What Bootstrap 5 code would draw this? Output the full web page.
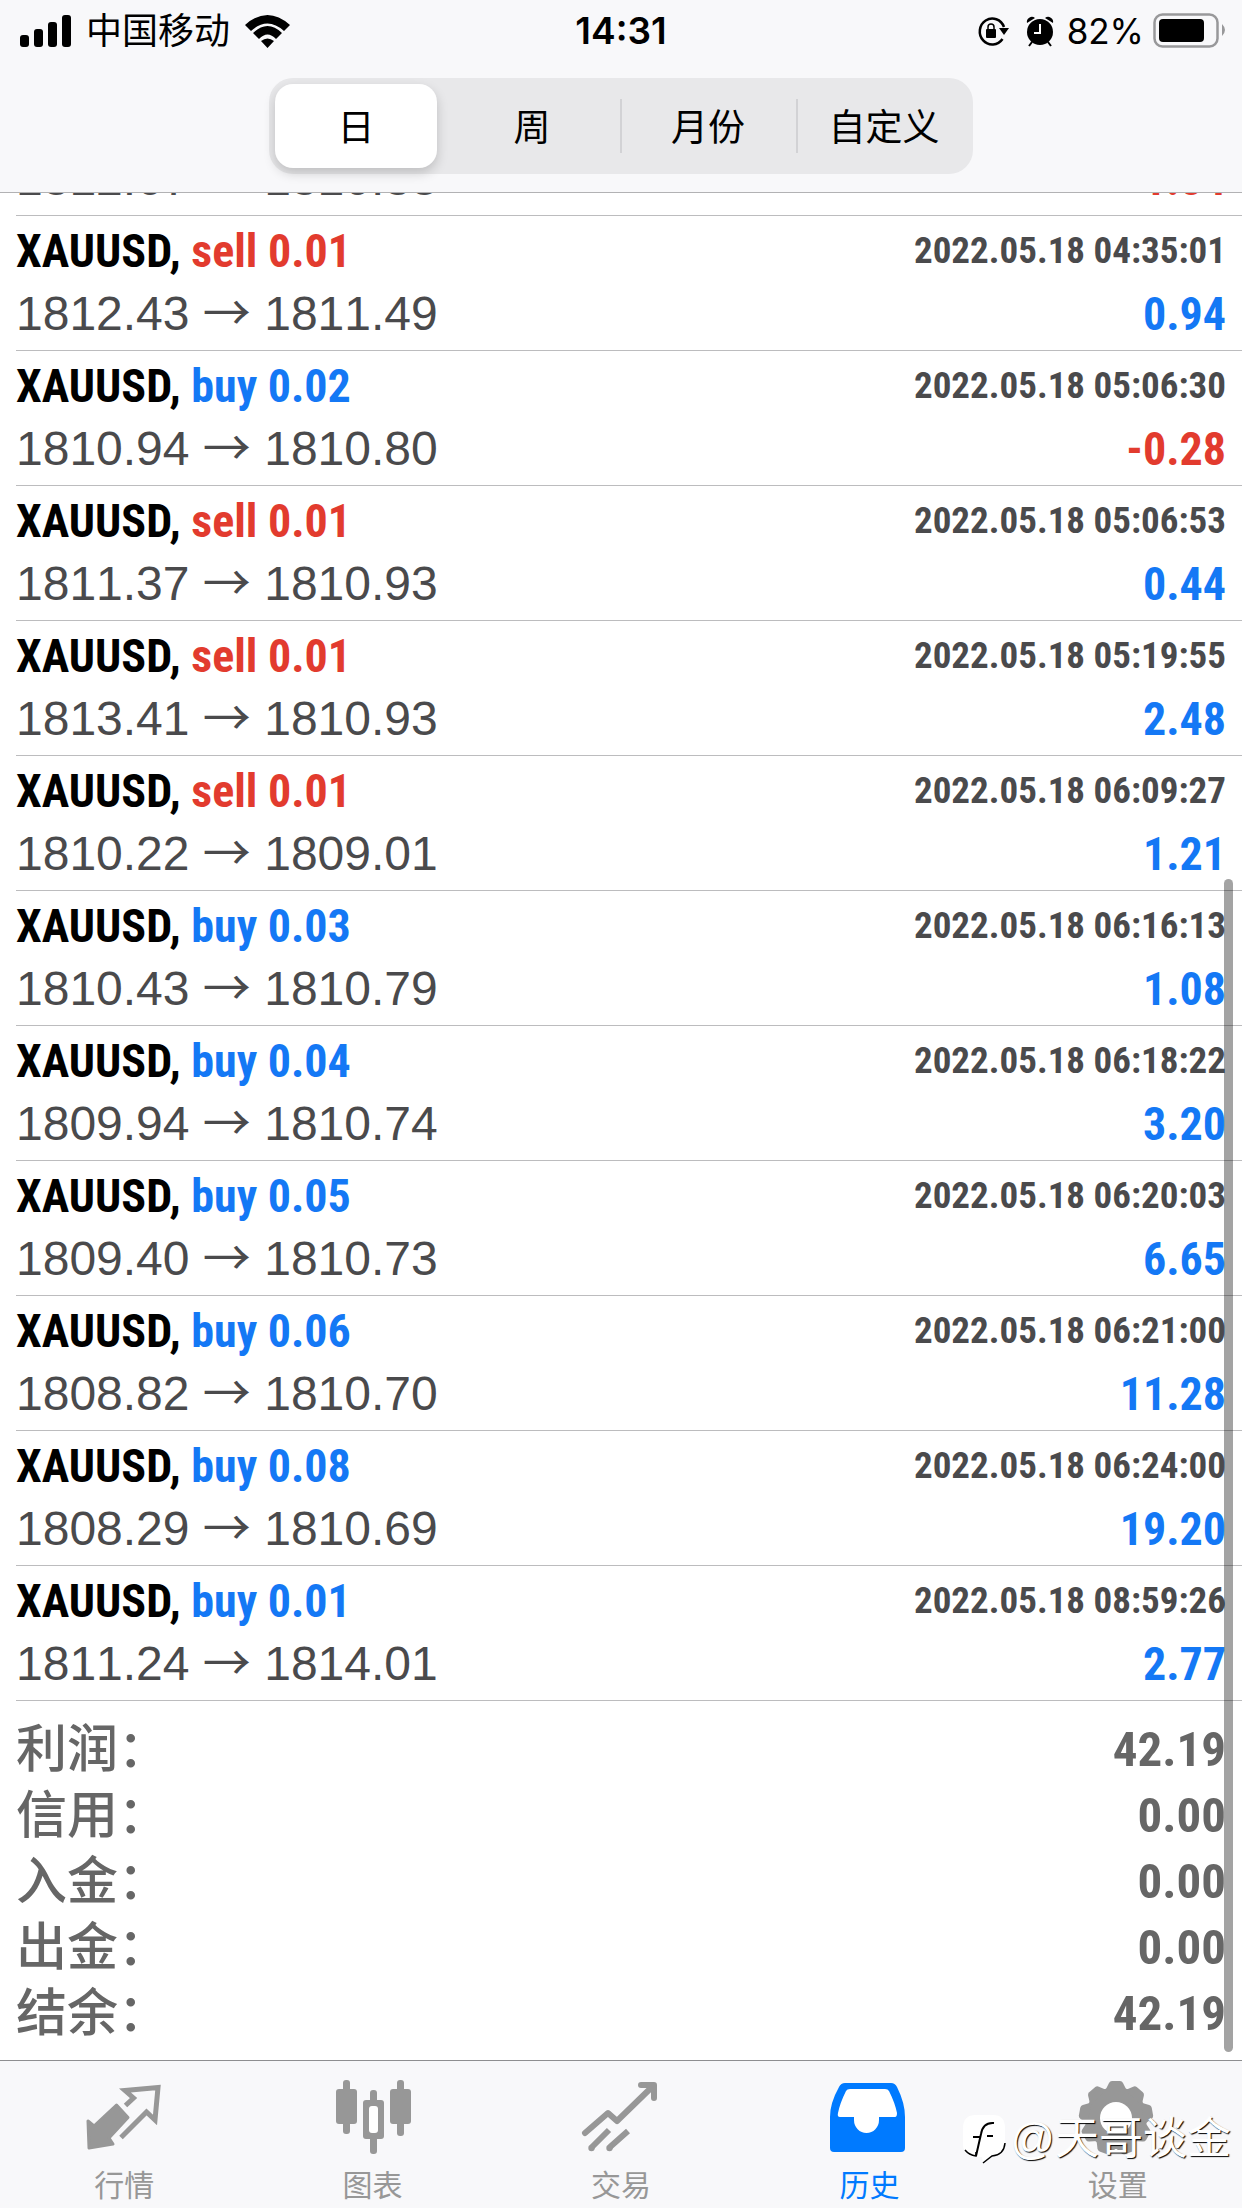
<!DOCTYPE html>
<html lang="zh-CN">
<head>
<meta charset="utf-8">
<meta name="viewport" content="width=device-width, initial-scale=1">
<title>历史</title>
<link href="https://cdn.jsdelivr.net/npm/bootstrap@5.3.0/dist/css/bootstrap.min.css" rel="stylesheet">
<style>
  :root { --chrome: #f8f8fa; --ink: #4a4a4c; --buy: #1478f5; --sell: #e23b2e; --idle: #979797; --active: #007aff; }
  body { font-family: "Liberation Sans", "Noto Sans CJK SC", sans-serif; color: #000; background: #fff; }
  .chrome-bar { background: var(--chrome); }
  .top-area { border-bottom: 1px solid #b2b2b4; padding-bottom: 18px; }
  .status-bar { height: 60px; padding: 2px 16px 0; }
  .status-bar .side { flex: 1 1 0; gap: 15px; }
  .status-bar .side-end { gap: 9px; }
  .carrier { font-size: 36px; line-height: 40px; padding-top: 2px; }
  .clock { font-family: Inter, sans-serif; font-size: 37px; line-height: 40px; font-weight: 600; }
  .charge { font-family: Inter, sans-serif; font-size: 35px; line-height: 40px; }
  .segments { width: 704px; max-width: 100%; height: 96px; margin-top: 18px; padding: 6px 0; border-radius: 24px; background: #e8e8ea; }
  .segments .btn { flex: 1 1 0; margin: 0 8px 0 6px; font-size: 37px; line-height: 44px; color: #000; border: 0; border-radius: 18px; padding: 5px 0 0; }
  .segments .btn-check:checked + .btn { background: #fff; color: #000; box-shadow: 0 5px 12px rgba(0,0,0,.18); }
  .divider-line { width: 2px; height: 54px; margin: 0 -1px; background: #d2d2d5; }
  .history-list { min-height: 0; }
  .deal { margin-left: 16px; border-bottom: 1px solid #bcbcbe; padding: 3px 16px 5px 0; }
  .condensed { font-family: "Roboto Condensed", "Liberation Sans", sans-serif; font-weight: 700; }
  .deal-name { font-size: 46px; line-height: 64px; }
  .deal-time { font-size: 37px; line-height: 64px; color: var(--ink); }
  .deal-price { font-size: 48px; line-height: 62px; color: var(--ink); font-kerning: none; }
  .deal-gain { font-size: 46px; line-height: 62px; }
  .arrow-glyph { font-family: "Noto Sans CJK SC", sans-serif; line-height: 1; }
  .buy { color: var(--buy); }
  .sell { color: var(--sell); }
  .totals { padding: 16px 16px 13px; color: #666; }
  .totals dt { font-size: 51px; line-height: 66px; font-weight: 500; }
  .totals dd { font-size: 49px; line-height: 66px; }
  .scroll-thumb { top: 686px; right: 9px; bottom: 8px; width: 9px; border-radius: 5px; background: rgba(0,0,0,.36); }
  .tabs-bar { border-top: 1px solid #8e8e90; }
  .tabs-bar .nav-link { color: var(--idle); padding: 18px 0 2px; font-size: 30px; line-height: 40px; gap: 11px; }
  .tabs-bar .nav-link.active { color: var(--active); }
  .tabs-bar svg { width: 76px; height: 76px; overflow: visible; }
  .stamp { right: 11px; bottom: 41px; gap: 4px; color: #fff; font-size: 44px; line-height: 56px; text-shadow: 1px 1px 1px #000; pointer-events: none; }
</style>
</head>
<body>
<div class="vh-100 d-flex flex-column overflow-hidden position-relative">
  <header class="chrome-bar top-area flex-shrink-0">
    <div class="status-bar d-flex align-items-center">
      <div class="side d-flex align-items-center">
        <svg class="ms-1" width="51" height="32" viewBox="0 0 51 32" aria-hidden="true"><rect y="20" width="9" height="12" rx="3"/><rect x="14" y="14" width="9" height="18" rx="3"/><rect x="28" y="7" width="9" height="25" rx="3"/><rect x="42" width="9" height="32" rx="3"/></svg>
        <span class="carrier">中国移动</span>
        <svg width="45" height="33" viewBox="0 0 45 33" aria-hidden="true"><path d="M0 10Q22.500-10 45 10L39 16Q22.500 1 6 16ZM8 18Q22.500 4 37 18L31 24Q22.500 15 14 24ZM16 26Q22.500 21 29 26L22.500 33Z"/></svg>
      </div>
      <time class="clock">14:31</time>
      <div class="side side-end d-flex align-items-center justify-content-end">
        <svg class="me-2" width="32" height="32" viewBox="0 0 32 32" aria-hidden="true"><path d="M25.500 24A12.500 13 0 1 1 27 12" fill="none" stroke="#000" stroke-width="2.500"/><path d="M22 13h10l-5 7z"/><rect x="9" y="14" width="10" height="9" rx="1"/><path d="M11 15v-3a3 3 0 0 1 6 0v3" fill="none" stroke="#000" stroke-width="1.500"/></svg>
        <svg class="me-1" width="28" height="32" viewBox="0 0 28 32" aria-hidden="true"><circle cx="14" cy="17" r="13"/><path d="M1 8a5 5 0 0 1 8-5zM27 8a5 5 0 0 0-8-5z"/><path d="M6 27l-3 4M22 27l3 4" stroke="#000" stroke-width="2"/><path d="M14 9v9H8" fill="none" stroke="#fff" stroke-width="2"/></svg>
        <span class="charge">82%</span>
        <svg class="flex-shrink-0" width="73" height="36" viewBox="0 0 73 36" aria-hidden="true"><rect x="1.500" y="1.500" width="63" height="32" rx="8" fill="none" stroke="#98989a" stroke-width="2.500"/><rect x="6" y="6" width="45" height="23" rx="4"/><path d="M69 11q6 6 0 12z" fill="#98989a"/></svg>
      </div>
    </div>
    <div class="segments d-flex align-items-center mx-auto" role="group" aria-label="周期">
      <input class="btn-check" type="radio" name="period" id="p-day" checked><label class="btn h-100 d-flex align-items-center justify-content-center" for="p-day">日</label>
      <input class="btn-check" type="radio" name="period" id="p-week"><label class="btn h-100 d-flex align-items-center justify-content-center" for="p-week">周</label>
      <span class="divider-line"></span>
      <input class="btn-check" type="radio" name="period" id="p-month"><label class="btn h-100 d-flex align-items-center justify-content-center" for="p-month">月份</label>
      <span class="divider-line"></span>
      <input class="btn-check" type="radio" name="period" id="p-custom"><label class="btn h-100 d-flex align-items-center justify-content-center" for="p-custom">自定义</label>
    </div>
  </header>

  <main class="history-list flex-grow-1 d-flex flex-column justify-content-end overflow-hidden position-relative">
    <div id="deals"></div>
    <dl class="totals m-0 flex-shrink-0">
      <div class="d-flex justify-content-between"><dt>利润：</dt><dd class="condensed m-0">42.19</dd></div>
      <div class="d-flex justify-content-between"><dt>信用：</dt><dd class="condensed m-0">0.00</dd></div>
      <div class="d-flex justify-content-between"><dt>入金：</dt><dd class="condensed m-0">0.00</dd></div>
      <div class="d-flex justify-content-between"><dt>出金：</dt><dd class="condensed m-0">0.00</dd></div>
      <div class="d-flex justify-content-between"><dt>结余：</dt><dd class="condensed m-0">42.19</dd></div>
    </dl>
    <span class="scroll-thumb position-absolute"></span>
  </main>

  <nav class="chrome-bar tabs-bar nav nav-fill nav-justified flex-nowrap flex-shrink-0">
    <a class="nav-link d-flex flex-column align-items-center" href="#">
      <svg viewBox="0 0 76 76" fill="none" stroke="currentColor" aria-hidden="true"><path d="M2 42L8 47L30.500 26L42 38.500L23 59L27 65L3 69Z" fill="currentColor" stroke-width="3" stroke-linejoin="round"/><path d="M39.500 26.500L47.500 19L39 11.500L72 8.500L69 41L60.500 33L35 58.500" stroke-width="5"/></svg>行情</a>
    <a class="nav-link d-flex flex-column align-items-center" href="#">
      <svg viewBox="0 0 76 76" fill="currentColor" aria-hidden="true"><rect x="1" y="10" width="21" height="35" rx="3"/><rect x="8" y="1" width="7" height="54" rx="3"/><rect x="28" y="21" width="21" height="39" rx="3"/><rect x="35" y="11" width="7" height="64" rx="3"/><rect x="34" y="27" width="9" height="27" rx="3" fill="#fff"/><rect x="55" y="10" width="21" height="35" rx="3"/><rect x="62" y="1" width="7" height="56" rx="3"/></svg>图表</a>
    <a class="nav-link d-flex flex-column align-items-center" href="#">
      <svg viewBox="0 0 76 76" fill="none" stroke="currentColor" stroke-width="6" aria-hidden="true"><path d="M2 54L25 34L34 42L70 7" stroke-linecap="round" stroke-linejoin="round"/><path d="M58 6H71V19" stroke-linecap="round" stroke-linejoin="round"/><path d="M9 68L26 51M27 68L45 52"/><g fill="currentColor" stroke="none"><circle cx="8.500" cy="69" r="3.200"/><circle cx="26.500" cy="69" r="3.200"/></g></svg>交易</a>
    <a class="nav-link active d-flex flex-column align-items-center" href="#" aria-current="page">
      <svg viewBox="0 0 76 76" aria-hidden="true"><path d="M14 4H60Q64 4 66 8Q74 24 74 38V69Q74 73 70 73H3Q-1 73-1 69V38Q-1 24 8 8Q10 4 14 4Z" fill="currentColor"/><path d="M19 10H54Q57 10 58 12Q64 24 66 34Q66 38 64 38H48V41A12.500 13 0 0 1 23 41V38H9Q6 38 7 34Q9 24 15 12Q16 10 19 10Z" fill="#fff"/></svg>历史</a>
    <a class="nav-link d-flex flex-column align-items-center" href="#">
      <svg viewBox="0 0 76 76" fill="currentColor" aria-hidden="true"><circle cx="36" cy="39" r="31"/><g id="teeth"></g><circle cx="36" cy="39" r="16" fill="#fff"/></svg>设置</a>
  </nav>

  <div class="stamp position-absolute d-flex align-items-center">
    <svg width="44" height="50" viewBox="0 0 44 50" aria-hidden="true"><path d="M14 1H31Q43 1 43 14V29Q42 41 30 42L21 49L20 43H14Q1 42 1 30V14Q1 1 14 1Z" fill="#fff"/><path d="M3 36Q7 41 14 42V38M43 29Q42 41 30 42L21 49" fill="none" stroke="#000" stroke-width="1.500"/><path d="M11 23H18M25 22H31M32 9Q21 8 19 20L14 42" fill="none" stroke="#000" stroke-width="2"/></svg>
    <span>@天哥谈金</span>
  </div>
</div>
<script>
// A deal without a time is scrolled under the header and shows its price line only.
const deals = [
  ['buy', '0.01', null, '1812.67', '1810.83', '-1.84'],
  ['sell', '0.01', '2022.05.18 04:35:01', '1812.43', '1811.49', '0.94'],
  ['buy', '0.02', '2022.05.18 05:06:30', '1810.94', '1810.80', '-0.28'],
  ['sell', '0.01', '2022.05.18 05:06:53', '1811.37', '1810.93', '0.44'],
  ['sell', '0.01', '2022.05.18 05:19:55', '1813.41', '1810.93', '2.48'],
  ['sell', '0.01', '2022.05.18 06:09:27', '1810.22', '1809.01', '1.21'],
  ['buy', '0.03', '2022.05.18 06:16:13', '1810.43', '1810.79', '1.08'],
  ['buy', '0.04', '2022.05.18 06:18:22', '1809.94', '1810.74', '3.20'],
  ['buy', '0.05', '2022.05.18 06:20:03', '1809.40', '1810.73', '6.65'],
  ['buy', '0.06', '2022.05.18 06:21:00', '1808.82', '1810.70', '11.28'],
  ['buy', '0.08', '2022.05.18 06:24:00', '1808.29', '1810.69', '19.20'],
  ['buy', '0.01', '2022.05.18 08:59:26', '1811.24', '1814.01', '2.77']
];
document.getElementById('deals').innerHTML = deals.map(([side, lots, time, open, close, gain]) => `
  <article class="deal">
    ${time ? `<div class="d-flex justify-content-between"><span class="deal-name condensed">XAUUSD, <span class="${side}">${side} ${lots}</span></span><time class="deal-time condensed">${time}</time></div>` : ''}
    <div class="d-flex justify-content-between"><span class="deal-price">${open} <span class="arrow-glyph">→</span> ${close}</span><span class="deal-gain condensed ${gain < 0 ? 'sell' : 'buy'}">${gain}</span></div>
  </article>`).join('');
document.getElementById('teeth').innerHTML = Array.from({ length: 9 }, (_, i) =>
  `<path d="M25 12L29 4Q30 2 32 2H40Q42 2 43 4L47 12Z" transform="rotate(${i * 40} 36 39)"/>`).join('');
</script>
<script src="https://cdn.jsdelivr.net/npm/bootstrap@5.3.0/dist/js/bootstrap.bundle.min.js"></script>
</body>
</html>
